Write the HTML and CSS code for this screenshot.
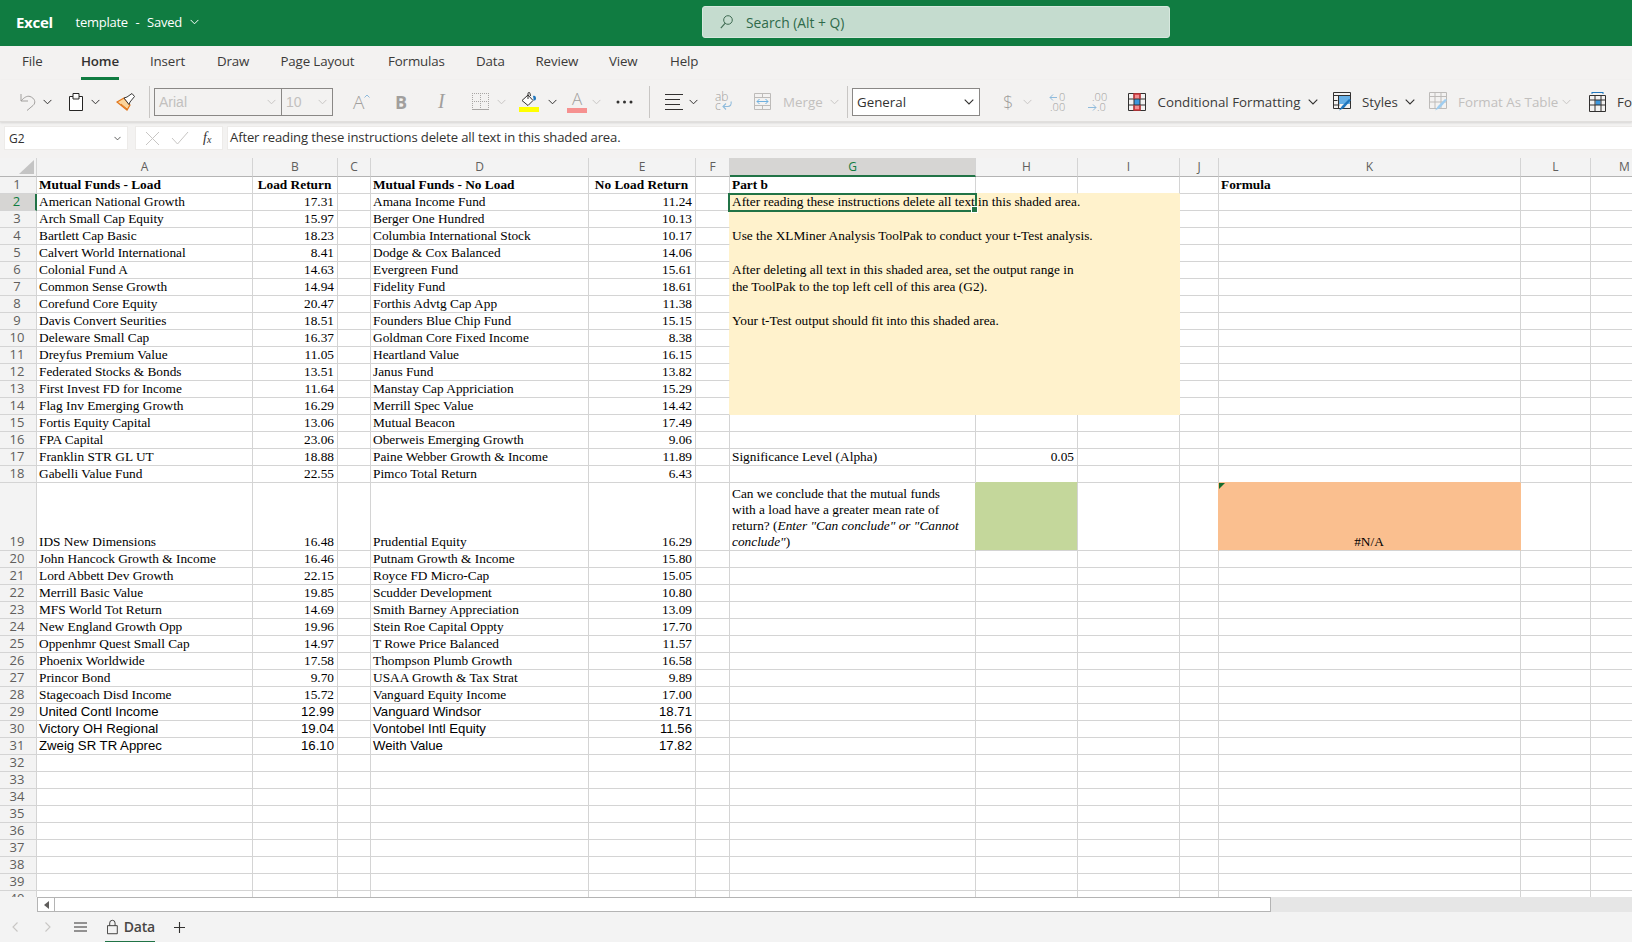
FILE: index.html
```html
<!DOCTYPE html>
<html lang="en">
<head>
<meta charset="utf-8">
<title>template - Excel</title>
<link rel="stylesheet" href="styles.css">
</head>
<body>
<svg class="defs" width="0" height="0" aria-hidden="true">
  <symbol id="chev" viewBox="0 0 10 6"><path d="M.7.7 5 5 9.300.7" fill="none" stroke="currentColor" stroke-width="1.100"/></symbol>
</svg>
<header class="titlebar">
  <span class="app">Excel</span>
  <span class="doc">template - Saved</span>
  <svg class="doc-chev" width="9" height="6"><use href="#chev"/></svg>
  <div class="search">
    <svg width="13" height="14" viewBox="0 0 13 14"><circle cx="8" cy="5" r="4.300" fill="none" stroke="#3f6b52" stroke-width="1"/><path d="M5 8.400.8 13.200" stroke="#3f6b52" stroke-width="1.100"/></svg>
    <span>Search (Alt + Q)</span>
  </div>
</header>
<nav class="tabs">
  <span>File</span><span class="on">Home</span><span>Insert</span><span>Draw</span><span>Page Layout</span><span>Formulas</span><span>Data</span><span>Review</span><span>View</span><span>Help</span>
</nav>
<div class="toolbar">
  <svg width="16" height="18" viewBox="0 0 16 18"><path d="M1 1v7h7M1 8c3-3.500 6-5.500 9-4.500 4.500 1.500 6.500 6 3 9L7 17.500" fill="none" stroke="#a19f9d" stroke-width="1"/></svg>
  <svg class="ch" width="9" height="6"><use href="#chev"/></svg>
  <svg width="14" height="18" viewBox="0 0 14 18"><path d="M.5 3.500H4V.5h6v3h3.500v14H.5zM4 3.500V6h6V3.500" fill="#fff" stroke="#252423"/></svg>
  <svg class="ch" width="9" height="6"><use href="#chev"/></svg>
  <svg width="19" height="18" viewBox="0 0 19 18"><path d="M1 9l7-4 6 7-3 5z" fill="#fbd49b" stroke="#e2761b" stroke-width="1.200"/><path d="M5 11l6 5" stroke="#e2761b"/><path d="M8 5l3-1 5-3.500 2.500 3L14 9l-1 2.500z" fill="#fff" stroke="#3b3a39"/></svg>
  <i class="sep"></i>
  <div class="combo font"><span>Arial</span><svg class="ch lt" width="9" height="6"><use href="#chev"/></svg></div>
  <div class="combo size"><span>10</span><svg class="ch lt" width="9" height="6"><use href="#chev"/></svg></div>
  <span class="grow-a">A<svg width="6" height="4" viewBox="0 0 6 4"><path d="M.5 3.500 3 1l2.500 2.500" fill="none" stroke="#8fbbdc"/></svg></span>
  <span class="bold-b">B</span>
  <span class="ital-i">I</span>
  <svg width="17" height="17" viewBox="0 0 17 17"><path d="M0 .5h17M0 8.500h17M.5 0v17M8.500 0v17M16.500 0v17" fill="none" stroke="#a8a6a4" stroke-dasharray="1 1"/><path d="M0 16.500h17" stroke="#a8a6a4"/></svg>
  <svg class="ch lt" width="9" height="6"><use href="#chev"/></svg>
  <span class="stack">
    <svg width="16" height="14" viewBox="0 0 16 14"><path d="M1 8.500 7 3l5 5.500L7 13.500z" fill="#fff" stroke="#323130"/><path d="M7 7V1.500a1 1 0 0 1 2 0L9.500 4" fill="none" stroke="#323130"/><path d="M12 4c2-1 3 .5 3 2.500 0 1-.8 2-1.500 2-1 0-1.300-1-1-2z" fill="#1f76bd"/></svg>
    <i class="bar yellow"></i>
  </span>
  <svg class="ch" width="9" height="6"><use href="#chev"/></svg>
  <span class="stack"><span class="color-a">A</span><i class="bar pink"></i></span>
  <svg class="ch lt" width="9" height="6"><use href="#chev"/></svg>
  <svg width="17" height="4" viewBox="0 0 17 4"><circle cx="2" cy="2" r="1.500" fill="#323130"/><circle cx="8.500" cy="2" r="1.500" fill="#323130"/><circle cx="15" cy="2" r="1.500" fill="#323130"/></svg>
  <i class="sep"></i>
  <svg width="18" height="18" viewBox="0 0 18 18"><path d="M0 1.500h18M0 6.500h15M0 11.500h15M0 16.500h18" stroke="#323130" stroke-width="1.100"/></svg>
  <svg class="ch" width="9" height="6"><use href="#chev"/></svg>
  <svg class="ico" width="18" height="18" viewBox="0 0 18 18"><text x="0" y="8" class="ic-t">ab</text><text x="0" y="17" class="ic-t">c</text><path d="M16 8.500c1 3-1 5-3 5H8m3-3-3 3 3 3" fill="none" stroke="#8fbbdc" stroke-width="1.100"/></svg>
  <svg width="17" height="17" viewBox="0 0 17 17"><path d="M.5.5h16v16H.5zM.5 4.500h16M.5 12.500h16M8.500.5v4M8.500 12.500v4" fill="none" stroke="#bdbbb9"/><path d="M3 8.500h11M5.500 6 3 8.500 5.500 11M11.500 6 14 8.500 11.500 11" fill="none" stroke="#6fb0de"/></svg>
  <span class="lbl off">Merge</span>
  <svg class="ch lt" width="9" height="6"><use href="#chev"/></svg>
  <i class="sep"></i>
  <div class="combo general"><span>General</span><svg class="ch" width="10" height="6"><use href="#chev"/></svg></div>
  <span class="dollar">$</span>
  <svg class="ch lt" width="9" height="6"><use href="#chev"/></svg>
  <svg class="ico" width="18" height="20" viewBox="0 0 18 20"><path d="M8 5.500H1M4 2.500l-3 3 3 3" fill="none" stroke="#8fbbdc"/><text x="10" y="9" class="ic-d">0</text><text x="1" y="19" class="ic-d">.00</text></svg>
  <svg class="ico" width="19" height="20" viewBox="0 0 19 20"><text x="4" y="9" class="ic-d">.00</text><path d="M0 15.500h8M5 12.500l3 3-3 3" fill="none" stroke="#8fbbdc"/><text x="9" y="19" class="ic-d">.0</text></svg>
  <svg width="18" height="18" viewBox="0 0 18 18"><path d="M6 1h6v5H6zM6 12h6v5H6z" fill="#f28b8f"/><path d="M6 6h6v6H6z" fill="#3a96dd"/><path d="M.5.5h17v17H.5zM6 .5v17M12 .5v17M.5 6h17M.5 12h17" fill="none" stroke="#323130"/><path d="M6 6V1h6v5M6 12v5h6v-5" fill="none" stroke="#d13438" stroke-width="1.300"/></svg>
  <span class="lbl">Conditional Formatting</span>
  <svg class="ch" width="10" height="6"><use href="#chev"/></svg>
  <svg width="19" height="19" viewBox="0 0 19 19"><path d="M5 4h12v8H5z" fill="#65afe6"/><path d="M.5.5h17v16H.5zM.5 3.500h17M5.500 3.500v13M.5 8.500h4M.5 13h6" fill="none" stroke="#323130"/><path d="M16 7 9 14l-3 4.500 5-2.500 7-8z" fill="#1f76bd"/></svg>
  <span class="lbl">Styles</span>
  <svg class="ch" width="10" height="6"><use href="#chev"/></svg>
  <svg width="19" height="19" viewBox="0 0 19 19"><path d="M.5.5h17v16H.5zM.5 4.500h17M6 .5v16M12 .5v16M.5 10h17" fill="none" stroke="#bdbbb9"/><path d="M16 7 9 14l-3 4.500 5-2.500 7-8z" fill="#9fcdf0"/></svg>
  <span class="lbl off">Format As Table</span>
  <svg class="ch lt" width="9" height="6"><use href="#chev"/></svg>
  <svg width="18" height="20" viewBox="0 0 18 20"><path d="M3 .5h11M3 0v2M14 0v2" fill="none" stroke="#1f76bd"/><path d="M6.500 8h5v5h-5z" fill="#3a96dd"/><path d="M.5 3.500h16v16H.5zM6 3.500v16M12 3.500v16M.5 8h16M.5 13h16" fill="none" stroke="#323130"/></svg>
  <span class="lbl">Format</span>
</div>
<div class="fbar">
  <div class="namebox"><span>G2</span><svg width="7" height="5"><use href="#chev"/></svg></div>
  <div class="fxbox">
    <svg width="15" height="15" viewBox="0 0 15 15"><path d="M1 1l13 13M14 1 1 14" stroke="#c8c6c4"/></svg>
    <svg width="18" height="14" viewBox="0 0 18 14"><path d="M1 7l5.500 6L17 1" fill="none" stroke="#c8c6c4"/></svg>
    <span class="fx">f<sub>x</sub></span>
  </div>
  <div class="finput">After reading these instructions delete all text in this shaded area.</div>
</div>
<main class="sheet">
<table class="grid">
<colgroup><col class="c0"><col class="ca"><col class="cb"><col class="cc"><col class="cd"><col class="ce"><col class="cf"><col class="cg"><col class="ch-w"><col class="ci"><col class="cj"><col class="ck"><col class="cl"><col class="cm"></colgroup>
<thead><tr><th class="corner"><i></i></th><th>A</th><th>B</th><th>C</th><th>D</th><th>E</th><th>F</th><th class="cur">G</th><th>H</th><th>I</th><th>J</th><th>K</th><th>L</th><th>M</th></tr></thead>
<tbody>
<tr><th>1</th><td class="b">Mutual Funds - Load</td><td class="b c">Load Return</td><td></td><td class="b">Mutual Funds - No Load</td><td class="b c">No Load Return</td><td></td><td class="b yb">Part b</td><td class="yb"></td><td class="yb"></td><td></td><td class="b">Formula</td><td></td><td></td></tr>
<tr><th class="cur">2</th><td>American National Growth</td><td class="n">17.31</td><td></td><td>Amana Income Fund</td><td class="n">11.24</td><td class="yr"></td><td class="y">After reading these instructions delete all text in this shaded area.</td><td class="y"></td><td class="y"></td><td></td><td></td><td></td><td></td></tr>
<tr><th>3</th><td>Arch Small Cap Equity</td><td class="n">15.97</td><td></td><td>Berger One Hundred</td><td class="n">10.13</td><td class="yr"></td><td class="y"></td><td class="y"></td><td class="y"></td><td></td><td></td><td></td><td></td></tr>
<tr><th>4</th><td>Bartlett Cap Basic</td><td class="n">18.23</td><td></td><td>Columbia International Stock</td><td class="n">10.17</td><td class="yr"></td><td class="y">Use the XLMiner Analysis ToolPak to conduct your t-Test analysis.</td><td class="y"></td><td class="y"></td><td></td><td></td><td></td><td></td></tr>
<tr><th>5</th><td>Calvert World International</td><td class="n">8.41</td><td></td><td>Dodge &amp; Cox Balanced</td><td class="n">14.06</td><td class="yr"></td><td class="y"></td><td class="y"></td><td class="y"></td><td></td><td></td><td></td><td></td></tr>
<tr><th>6</th><td>Colonial Fund A</td><td class="n">14.63</td><td></td><td>Evergreen Fund</td><td class="n">15.61</td><td class="yr"></td><td class="y">After deleting all text in this shaded area, set the output range in</td><td class="y"></td><td class="y"></td><td></td><td></td><td></td><td></td></tr>
<tr><th>7</th><td>Common Sense Growth</td><td class="n">14.94</td><td></td><td>Fidelity Fund</td><td class="n">18.61</td><td class="yr"></td><td class="y">the ToolPak to the top left cell of this area (G2).</td><td class="y"></td><td class="y"></td><td></td><td></td><td></td><td></td></tr>
<tr><th>8</th><td>Corefund Core Equity</td><td class="n">20.47</td><td></td><td>Forthis Advtg Cap App</td><td class="n">11.38</td><td class="yr"></td><td class="y"></td><td class="y"></td><td class="y"></td><td></td><td></td><td></td><td></td></tr>
<tr><th>9</th><td>Davis Convert Seurities</td><td class="n">18.51</td><td></td><td>Founders Blue Chip Fund</td><td class="n">15.15</td><td class="yr"></td><td class="y">Your t-Test output should fit into this shaded area.</td><td class="y"></td><td class="y"></td><td></td><td></td><td></td><td></td></tr>
<tr><th>10</th><td>Deleware Small Cap</td><td class="n">16.37</td><td></td><td>Goldman Core Fixed Income</td><td class="n">8.38</td><td class="yr"></td><td class="y"></td><td class="y"></td><td class="y"></td><td></td><td></td><td></td><td></td></tr>
<tr><th>11</th><td>Dreyfus Premium Value</td><td class="n">11.05</td><td></td><td>Heartland Value</td><td class="n">16.15</td><td class="yr"></td><td class="y"></td><td class="y"></td><td class="y"></td><td></td><td></td><td></td><td></td></tr>
<tr><th>12</th><td>Federated Stocks &amp; Bonds</td><td class="n">13.51</td><td></td><td>Janus Fund</td><td class="n">13.82</td><td class="yr"></td><td class="y"></td><td class="y"></td><td class="y"></td><td></td><td></td><td></td><td></td></tr>
<tr><th>13</th><td>First Invest FD for Income</td><td class="n">11.64</td><td></td><td>Manstay Cap Appriciation</td><td class="n">15.29</td><td class="yr"></td><td class="y"></td><td class="y"></td><td class="y"></td><td></td><td></td><td></td><td></td></tr>
<tr><th>14</th><td>Flag Inv Emerging Growth</td><td class="n">16.29</td><td></td><td>Merrill Spec Value</td><td class="n">14.42</td><td class="yr"></td><td class="y"></td><td class="y"></td><td class="y"></td><td></td><td></td><td></td><td></td></tr>
<tr><th>15</th><td>Fortis Equity Capital</td><td class="n">13.06</td><td></td><td>Mutual Beacon</td><td class="n">17.49</td><td></td><td></td><td></td><td></td><td></td><td></td><td></td><td></td></tr>
<tr><th>16</th><td>FPA Capital</td><td class="n">23.06</td><td></td><td>Oberweis Emerging Growth</td><td class="n">9.06</td><td></td><td></td><td></td><td></td><td></td><td></td><td></td><td></td></tr>
<tr><th>17</th><td>Franklin STR GL UT</td><td class="n">18.88</td><td></td><td>Paine Webber Growth &amp; Income</td><td class="n">11.89</td><td></td><td>Significance Level (Alpha)</td><td class="n">0.05</td><td></td><td></td><td></td><td></td><td></td></tr>
<tr><th>18</th><td>Gabelli Value Fund</td><td class="n">22.55</td><td></td><td>Pimco Total Return</td><td class="n">6.43</td><td></td><td></td><td class="gb"></td><td></td><td></td><td class="ob"></td><td></td><td></td></tr>
<tr class="tall"><th>19</th><td>IDS New Dimensions</td><td class="n">16.48</td><td></td><td>Prudential Equity</td><td class="n">16.29</td><td></td><td class="wrap gr">Can we conclude that the mutual funds<br>with a load have a greater mean rate of<br>return? (<em>Enter "Can conclude" or "Cannot<br>conclude"</em>)</td><td class="green"></td><td></td><td class="or"></td><td class="orange c note">#N/A</td><td></td><td></td></tr>
<tr><th>20</th><td>John Hancock Growth &amp; Income</td><td class="n">16.46</td><td></td><td>Putnam Growth &amp; Income</td><td class="n">15.80</td><td></td><td></td><td></td><td></td><td></td><td></td><td></td><td></td></tr>
<tr><th>21</th><td>Lord Abbett Dev Growth</td><td class="n">22.15</td><td></td><td>Royce FD Micro-Cap</td><td class="n">15.05</td><td></td><td></td><td></td><td></td><td></td><td></td><td></td><td></td></tr>
<tr><th>22</th><td>Merrill Basic Value</td><td class="n">19.85</td><td></td><td>Scudder Development</td><td class="n">10.80</td><td></td><td></td><td></td><td></td><td></td><td></td><td></td><td></td></tr>
<tr><th>23</th><td>MFS World Tot Return</td><td class="n">14.69</td><td></td><td>Smith Barney Appreciation</td><td class="n">13.09</td><td></td><td></td><td></td><td></td><td></td><td></td><td></td><td></td></tr>
<tr><th>24</th><td>New England Growth Opp</td><td class="n">19.96</td><td></td><td>Stein Roe Capital Oppty</td><td class="n">17.70</td><td></td><td></td><td></td><td></td><td></td><td></td><td></td><td></td></tr>
<tr><th>25</th><td>Oppenhmr Quest Small Cap</td><td class="n">14.97</td><td></td><td>T Rowe Price Balanced</td><td class="n">11.57</td><td></td><td></td><td></td><td></td><td></td><td></td><td></td><td></td></tr>
<tr><th>26</th><td>Phoenix Worldwide</td><td class="n">17.58</td><td></td><td>Thompson Plumb Growth</td><td class="n">16.58</td><td></td><td></td><td></td><td></td><td></td><td></td><td></td><td></td></tr>
<tr><th>27</th><td>Princor Bond</td><td class="n">9.70</td><td></td><td>USAA Growth &amp; Tax Strat</td><td class="n">9.89</td><td></td><td></td><td></td><td></td><td></td><td></td><td></td><td></td></tr>
<tr><th>28</th><td>Stagecoach Disd Income</td><td class="n">15.72</td><td></td><td>Vanguard Equity Income</td><td class="n">17.00</td><td></td><td></td><td></td><td></td><td></td><td></td><td></td><td></td></tr>
<tr class="sans"><th>29</th><td>United Contl Income</td><td class="n">12.99</td><td></td><td>Vanguard Windsor</td><td class="n">18.71</td><td></td><td></td><td></td><td></td><td></td><td></td><td></td><td></td></tr>
<tr class="sans"><th>30</th><td>Victory OH Regional</td><td class="n">19.04</td><td></td><td>Vontobel Intl Equity</td><td class="n">11.56</td><td></td><td></td><td></td><td></td><td></td><td></td><td></td><td></td></tr>
<tr class="sans"><th>31</th><td>Zweig SR TR Apprec</td><td class="n">16.10</td><td></td><td>Weith Value</td><td class="n">17.82</td><td></td><td></td><td></td><td></td><td></td><td></td><td></td><td></td></tr>
<tr><th>32</th><td></td><td></td><td></td><td></td><td></td><td></td><td></td><td></td><td></td><td></td><td></td><td></td><td></td></tr>
<tr><th>33</th><td></td><td></td><td></td><td></td><td></td><td></td><td></td><td></td><td></td><td></td><td></td><td></td><td></td></tr>
<tr><th>34</th><td></td><td></td><td></td><td></td><td></td><td></td><td></td><td></td><td></td><td></td><td></td><td></td><td></td></tr>
<tr><th>35</th><td></td><td></td><td></td><td></td><td></td><td></td><td></td><td></td><td></td><td></td><td></td><td></td><td></td></tr>
<tr><th>36</th><td></td><td></td><td></td><td></td><td></td><td></td><td></td><td></td><td></td><td></td><td></td><td></td><td></td></tr>
<tr><th>37</th><td></td><td></td><td></td><td></td><td></td><td></td><td></td><td></td><td></td><td></td><td></td><td></td><td></td></tr>
<tr><th>38</th><td></td><td></td><td></td><td></td><td></td><td></td><td></td><td></td><td></td><td></td><td></td><td></td><td></td></tr>
<tr><th>39</th><td></td><td></td><td></td><td></td><td></td><td></td><td></td><td></td><td></td><td></td><td></td><td></td><td></td></tr>
<tr><th>40</th><td></td><td></td><td></td><td></td><td></td><td></td><td></td><td></td><td></td><td></td><td></td><td></td><td></td></tr>
</tbody>
</table>
<div class="selection"></div>
</main>
<div class="hscroll">
  <div class="sb-btn"><svg width="5" height="8" viewBox="0 0 5 8"><path d="M5 0v8L0 4z" fill="#605e5c"/></svg></div>
  <div class="sb-thumb"></div>
</div>
<footer class="sheetbar">
  <svg class="nav" width="6" height="10" viewBox="0 0 6 10"><path d="M5.500.5 1 5l4.500 4.500" fill="none" stroke="#c8c6c4" stroke-width="1.100"/></svg>
  <svg class="nav" width="6" height="10" viewBox="0 0 6 10"><path d="M.5.5 5 5 .5 9.500" fill="none" stroke="#c8c6c4" stroke-width="1.100"/></svg>
  <svg width="13" height="10" viewBox="0 0 13 10"><path d="M0 1h13M0 5h13M0 9h13" stroke="#323130" stroke-width="1.100"/></svg>
  <div class="sheet-tab">
    <svg width="12" height="16" viewBox="0 0 12 16"><path d="M.5 6.500h11v9H.5zM3 6.500V3.500a3 3 0 0 1 6 0v3" fill="none" stroke="#323130"/></svg>
    <span>Data</span>
  </div>
  <svg width="11" height="11" viewBox="0 0 11 11"><path d="M5.500 0v11M0 5.500h11" stroke="#323130" stroke-width="1.100"/></svg>
</footer>
</body>
</html>
```
FILE: styles.css
```css
* { box-sizing: border-box; }
html, body { margin: 0; padding: 0; height: 100%; overflow: hidden; }
body { width: 1632px; height: 942px; background: #f3f2f1; font-family: "Open Sans", "Noto Sans", sans-serif; color: #323130; display: flex; flex-direction: column; }
.defs { position: absolute; }
.ico { overflow: visible; }

.titlebar { height: 46px; flex: none; background: #107c41; color: #fff; display: grid; grid-template-columns: 59.5px 114px 12px 500.5px 468px; align-items: center; padding: 0 0 2px 16px; }
.app { font-weight: 700; font-size: 15px; letter-spacing: -.3px; }
.doc { font-size: 13px; letter-spacing: -.25px; word-spacing: 4.5px; white-space: nowrap; }
.doc-chev { color: #fff; }
.search { grid-column: 5; height: 32px; background: #c5dccf; border-radius: 3px; border: 1px solid #d7e8de; display: flex; align-items: center; padding-left: 17px; gap: 13px; color: #2f6a4a; font-size: 13.800px; }

.tabs { height: 34px; flex: none; display: grid; grid-template-columns: 59px 69px 67px 63.500px 107.500px 88px 59.500px 73.500px 61px 60px; padding-left: 22px; align-items: center; font-size: 13.330px; letter-spacing: -.15px; background: #f3f2f1; color: #3b3a39; }
.tabs span { white-space: nowrap; height: 34px; line-height: 31px; }
.tabs .on { font-weight: 600; color: #323130; width: 38px; border-bottom: 3px solid #107c41; }

.toolbar { height: 42px; flex: none; display: grid; align-items: center; padding: 2px 0 0 20px; overflow: hidden; border-bottom: 1px solid #e1dfdd; box-shadow: 0 1px 2px rgba(0,0,0,.12); position: relative; background: #f3f2f1;
  grid-template-columns: 23px 26px 22px 25px 33px 5px 127px 72px 43px 42px 34px 25px 22px 29px 19px 25px 24px 33px 16px 24px 26px 39px 29px 47px 17px 5px 151px 20px 26px 39px 40px 29.500px 150.500px 25px 29px 43px 24px 29px 104px 27px 28px 60px; }
.ch { color: #323130; }
.ch.lt { color: #c8c6c4; }
.sep { display: block; width: 1px; height: 32px; background: #c8c6c4; }
.combo { height: 28px; border: 1px solid #8a8886; display: flex; align-items: center; justify-content: space-between; padding: 0 5px 0 4px; font-size: 13.330px; }
.font { width: 128px; color: #c2c0be; font-family: "Liberation Sans", sans-serif; font-size: 14px; }
.size { width: 52px; color: #c2c0be; font-family: "Liberation Sans", sans-serif; font-size: 14px; }
.general { width: 128px; background: #fff; color: #323130; }
.grow-a { display: flex; align-items: flex-start; font-size: 19px; font-weight: 300; color: #a19f9d; line-height: 24px; }
.grow-a svg { margin-top: 4px; }
.bold-b { font-size: 18px; font-weight: 700; color: #a19f9d; margin-left: -1px; }
.ital-i { font-family: "Liberation Serif", serif; font-style: italic; font-size: 20px; color: #a19f9d; }
.stack { display: flex; flex-direction: column; align-items: center; width: 20px; gap: 1px; }
.bar { display: block; width: 20px; height: 5px; }
.yellow { background: #ffff00; }
.pink { background: #f69190; }
.color-a { font-size: 17px; font-weight: 300; line-height: 17px; color: #a19f9d; }
.lbl { font-size: 13.330px; white-space: nowrap; color: #3b3a39; }
.off { color: #c2c0be; }
.dollar { font-size: 18px; font-weight: 300; color: #a19f9d; }
.ic-t { font: 300 12px "Open Sans", sans-serif; fill: #a19f9d; }
.ic-d { font: 300 11px "Open Sans", sans-serif; fill: #a19f9d; }

.fbar { height: 36px; flex: none; display: flex; align-items: flex-start; padding: 4px 0 0 4px; background: #f3f2f1; }
.namebox { width: 124px; height: 24px; background: #fff; border: 1px solid #edebe9; display: flex; align-items: center; justify-content: space-between; padding: 0 6px 0 4px; font-size: 12px; color: #323130; }
.fxbox { width: 88px; height: 24px; margin-left: 7px; background: #fff; border: 1px solid #edebe9; display: flex; align-items: center; padding-left: 9px; }
.fxbox svg + svg { margin-left: 11px; }
.fx { font-family: "Liberation Serif", serif; font-style: italic; font-size: 14px; margin-left: 14px; line-height: 14px; color: #323130; }
.fx sub { font-size: 10px; vertical-align: -1px; line-height: 0; }
.finput { flex: 1; height: 24px; margin-left: 4px; background: #fff; border: 1px solid #edebe9; border-right: 0; padding-left: 2px; font-size: 13.100px; line-height: 21px; letter-spacing: -.15px; color: #323130; white-space: nowrap; }

.sheet { height: 739px; flex: none; overflow: hidden; position: relative; background: #fff; }
.grid { table-layout: fixed; width: 1659px; border-collapse: separate; border-spacing: 0; font-family: "Liberation Serif", serif; font-size: 13.330px; color: #000; }
.c0 { width: 37px; } .ca { width: 216px; } .cb { width: 85px; } .cc { width: 33px; } .cd { width: 218px; } .ce { width: 107px; } .cf { width: 34px; } .cg { width: 246px; } .ch-w { width: 102px; } .ci { width: 102px; } .cj { width: 39px; } .ck { width: 302px; } .cl { width: 70px; } .cm { width: 68px; }
.grid th { background: #f3f3f3; font-family: "Open Sans", sans-serif; font-weight: 400; font-size: 13px; color: #605e5c; padding: 0; border-right: 1px solid #d4d4d4; border-bottom: 1px solid #d4d4d4; text-align: center; }
.grid thead th { height: 19px; line-height: 17px; border-bottom: 1px solid #b4b4b4; font-size: 12px; vertical-align: top; }
.grid thead th.cur { background: #d6d5d3; color: #107c41; border-bottom: 2px solid #217346; }
.grid tbody th { padding: 0 2px 1px 0; line-height: 15px; }
.grid tbody th.cur { background: #d6d5d3; color: #107c41; border-right: 2px solid #217346; }
.corner i { display: block; width: 0; height: 0; margin: 2px 0 0 19px; border-style: solid; border-width: 0 0 14px 15px; border-color: transparent transparent #c4c4c4 transparent; }
.grid td { height: 17px; padding: 0 3px 1px 2px; line-height: 15px; white-space: nowrap; border-right: 1px solid #d4d4d4; border-bottom: 1px solid #d4d4d4; vertical-align: bottom; overflow: visible; }
.grid tr.tall td, .grid tr.tall th { height: 68px; vertical-align: bottom; }
.sans td { font-family: "Liberation Sans", sans-serif; font-size: 13.200px; }
.grid td.wrap { line-height: 16px; padding-bottom: 0; }
td.b { font-weight: 700; }
td.c { text-align: center; }
td.n { text-align: right; }
td.y { background: #fff2cc; border-color: #fff2cc; }
td.yb { border-bottom-color: #fff2cc; }
td.yr { border-right-color: #fff2cc; }
td.gb { border-bottom-color: #c4d79b; }
td.gr { border-right-color: #c4d79b; }
td.green { background: #c4d79b; border-right-color: #d4d4d4; }
td.ob { border-bottom-color: #fabf8f; }
td.or { border-right-color: #fabf8f; }
td.orange { background: #fabf8f; border-right-color: #fabf8f; }
td.note { position: relative; }
td.note::before { content: ""; position: absolute; left: 0; top: 0; border-style: solid; border-width: 6px 6px 0 0; border-color: #146c2e transparent transparent transparent; }
td.wrap em { font-style: italic; }
.selection { position: absolute; left: 728px; top: 35px; width: 249px; height: 19px; border: 2px solid #217346; pointer-events: none; }
.selection::after { content: ""; position: absolute; right: -3px; bottom: -3px; width: 5px; height: 5px; background: #217346; border: 1px solid #fff; }

.hscroll { height: 15px; flex: none; display: flex; background: #e6e6e6; padding-left: 37px; box-shadow: inset 37px 0 0 #f3f3f3; }
.sb-btn { width: 18px; height: 15px; background: #fff; border: 1px solid #b4b4b4; display: flex; align-items: center; justify-content: center; }
.sb-thumb { width: 1216px; height: 15px; background: #fff; border: 1px solid #b4b4b4; border-left: 0; }

.sheetbar { flex: 1; display: grid; grid-template-columns: 33px 29px 31px 69px 20px; align-items: center; padding-left: 12px; background: #f3f3f3; }
.sheet-tab { height: 30px; width: 50px; display: flex; align-items: center; gap: 6px; padding-left: 2px; border-bottom: 1px solid #217346; font-size: 14px; font-weight: 600; color: #484644; letter-spacing: -.2px; }
```
